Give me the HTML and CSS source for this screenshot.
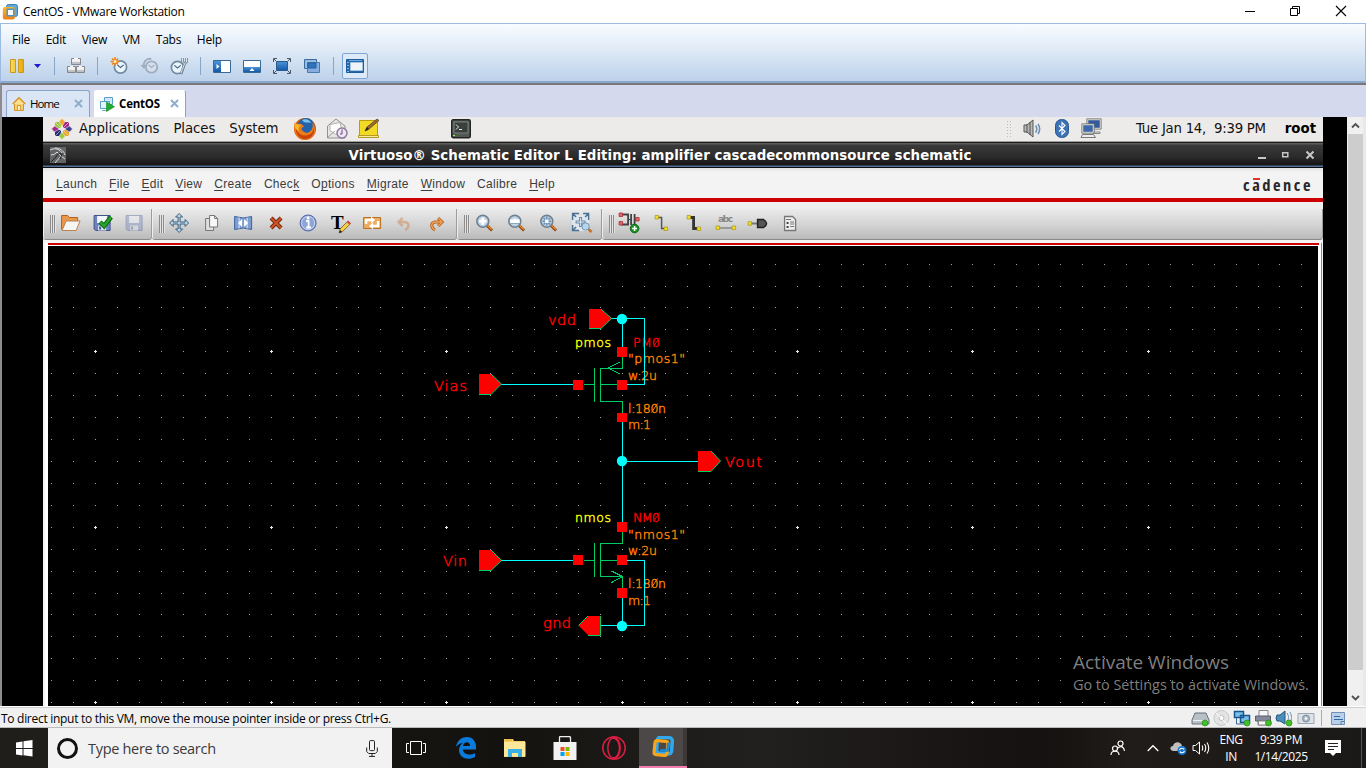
FILE: index.html
```html
<!DOCTYPE html>
<html lang="en">
<head>
<meta charset="utf-8">
<title>CentOS - VMware Workstation</title>
<link rel="stylesheet" href="styles.css">
</head>
<body>
<svg class="defs" width="0" height="0">
  <defs>
    <linearGradient id="gold" x1="0" y1="0" x2="1" y2="0"><stop offset="0" stop-color="#f7dc62"/><stop offset="1" stop-color="#e9a90c"/></linearGradient>
    <linearGradient id="blue" x1="0" y1="0" x2="0" y2="1"><stop offset="0" stop-color="#4d93d8"/><stop offset="1" stop-color="#1458a8"/></linearGradient>
    <linearGradient id="vmo" x1="0" y1="0" x2="0" y2="1"><stop offset="0" stop-color="#ffb52d"/><stop offset="1" stop-color="#ef7d10"/></linearGradient>
    <radialGradient id="lens"><stop offset="0" stop-color="#fff"/><stop offset="1" stop-color="#9dbbd4"/></radialGradient>
    <symbol id="clock" viewBox="0 0 14 14"><circle cx="7" cy="7" r="5.7" fill="#eaf5fb" stroke="#6f8ba3" stroke-width="1.6"/><path d="M4 5l3 2.5L10 5" fill="none" stroke="#406586" stroke-width="1.1"/></symbol>
    <symbol id="mag" viewBox="0 0 18 18"><path d="M11.5 11.5l5 5" stroke="#8b4308" stroke-width="3"/><path d="M11.5 11l4.8 4.8" stroke="#e18a2d" stroke-width="1.4"/><circle cx="7.2" cy="7.2" r="6" fill="url(#lens)" stroke="#71808d" stroke-width="1.5"/></symbol>
    <symbol id="floppy" viewBox="0 0 18 18"><path d="M1 1.5h16v15H2.500L1 15z" fill="#6d83bf" stroke="#42548c"/><path d="M4 2h10v7H4z" fill="#f4f6fb"/><path d="M5 11.500h8v5H5z" fill="#dfe4ec"/><path d="M6 12.500h2v3H6z" fill="#475b91"/></symbol>
  </defs>
</svg>

<header class="titlebar">
  <svg class="app-icon" width="16" height="16" viewBox="0 0 16 16"><rect x="4.500" y=".5" width="11" height="12" rx="2" fill="#5ea9da" stroke="#3d80b6"/><rect x=".8" y="3" width="12" height="12.500" rx="2" fill="url(#vmo)"/><path d="M4.500 4.500h8v8h-8z" fill="#4c94cf"/><path d="M6 6h5v5H6z" fill="#fff"/></svg>
  <span class="app-title">CentOS - VMware Workstation</span>
  <div class="win-buttons">
    <svg width="46" height="22" viewBox="0 0 46 22"><path d="M18 10.500h10" stroke="#000"/></svg>
    <svg width="46" height="22" viewBox="0 0 46 22"><path d="M17.500 7.500h7v7h-7zM19.500 7V5.500h7v7h-2" fill="none" stroke="#000"/></svg>
    <svg width="46" height="22" viewBox="0 0 46 22"><path d="M17 5l10 10M27 5L17 15" stroke="#000" stroke-width="1.100"/></svg>
  </div>
</header>

<section class="ribbon">
  <nav class="vm-menu"><span>File</span><span>Edit</span><span>View</span><span>VM</span><span>Tabs</span><span>Help</span></nav>
  <div class="vm-tools">
    <svg class="slot" viewBox="0 0 30 24"><path d="M8.500 5.500h5v13h-5zM16.500 5.500h5v13h-5z" fill="url(#gold)" stroke="#c99a1c"/></svg>
    <svg class="drop" viewBox="0 0 12 24"><path d="M2 10h7l-3.500 4z" fill="#1c1cc8"/></svg>
    <i class="sep sep-a"></i>
    <svg class="slot" viewBox="0 0 30 24"><g fill="#f0f0f0" stroke="#85898d"><path d="M10.500 4.500h9v6h-9zM6.500 12.500h8v6h-8zM15.500 12.500h8v6h-8z"/></g><path d="M11 9h8M7 17h7M16 17h7" stroke="#bfc1c4" stroke-width="2"/><path d="M13 4.500h4M9 12.500h3M18 12.500h3" stroke="#fff"/></svg>
    <i class="sep sep-b"></i>
    <svg class="slot" viewBox="0 0 30 24"><use href="#clock" x="8" y="5.500" width="15" height="15"/><path d="M10 3v9M5.500 7.500h9M7 4.500l6 6M13 4.500l-6 6" stroke="#ef8420" stroke-width="1.500"/><circle cx="10" cy="7.500" r="1.500" fill="#fff3b0"/></svg>
    <svg class="slot" viewBox="0 0 30 24"><g fill="none" stroke="#9fadbf" stroke-width="1.800"><circle cx="16.500" cy="13" r="5.700" fill="#d5e0ee"/><path d="M8.500 12.500c0-6 4-8.500 8-7.500"/><path d="M13.500 11l3 2.500 3-2.500" stroke-width="1.100"/></g><path d="M5.500 11h6.500l-3 4z" fill="#9fadbf"/></svg>
    <svg class="slot" viewBox="0 0 30 24"><use href="#clock" x="5" y="6" width="15" height="15"/><path d="M17.500 4v4l2 2 2-2V4M19.500 10L16 20" fill="none" stroke="#6f8495" stroke-width="2.600"/><path d="M17.500 4v4l2 2 2-2V4M19.500 10L16 19" fill="none" stroke="#d9e4ec" stroke-width="1"/></svg>
    <i class="sep sep-c"></i>
    <svg class="slot" viewBox="0 0 30 24"><path d="M6.500 6.500h17v12h-17z" fill="#fff" stroke="#386894"/><path d="M7 7h7v11H7z" fill="url(#blue)"/><path d="M9.500 10l3 2.500-3 2.500z" fill="#fff"/></svg>
    <svg class="slot" viewBox="0 0 30 24"><path d="M6.500 6.500h17v12h-17z" fill="#fff" stroke="#386894"/><path d="M7 13h16v5H7z" fill="url(#blue)"/><path d="M12.500 17l2.500-3 2.500 3z" fill="#fff"/></svg>
    <svg class="slot" viewBox="0 0 30 24"><path d="M9.500 7.500h11v9h-11z" fill="url(#blue)" stroke="#295a8c"/><path d="M6.500 8V4.500H10M20 4.500h3.500V8M6.500 16v3.500H10M20 19.500h3.500V16M7 5l2 2M23 5l-2 2M7 19l2-2M23 19l-2-2" fill="none" stroke="#4a5865"/></svg>
    <svg class="slot" viewBox="0 0 30 24"><path d="M7.500 5.500h12v9h-12z" fill="#9bbce0" stroke="#396c9f"/><path d="M10.500 8.500h12v10h-12z" fill="#87ace0" stroke="#4a7bab"/><path d="M11 9h8v5h-8z" fill="#2e74be" stroke="#225f9f"/></svg>
    <i class="sep sep-d"></i>
    <div class="pressed"><svg width="20" height="16" viewBox="0 0 20 16"><path d="M1.500 1.500h17v13h-17z" fill="#2468ab" stroke="#1a5c9e"/><path d="M5.500 4.500h12v8h-12z" fill="#eef4fa" stroke="#a7c4e0"/><path d="M3 4v1M3 7v1M3 10v1M3 13v1" stroke="#fff"/><path d="M4 2.500h13" stroke="#73a9dc"/></svg></div>
  </div>
</section>

<div class="tabs">
  <div class="tab tab-home"><svg width="14" height="16" viewBox="0 0 14 16"><path d="M2.500 7v7.500h9V7" fill="#f7cf72" stroke="#d2952a"/><path d="M.7 8L7 1.700 13.300 8" fill="#ffe093" stroke="#d49527" stroke-width="1.500"/><path d="M5.500 9.500h3v5h-3z" fill="#fff0b8" stroke="#d49b3b"/></svg><span>Home</span><svg class="x" width="9" height="9" viewBox="0 0 9 9"><path d="M1 1l7 7M8 1L1 8" stroke="#8eaecb" stroke-width="2"/></svg></div>
  <div class="tab tab-active"><svg width="15" height="16" viewBox="0 0 15 16"><path d="M4.500 1.500h8v7h-8z" fill="#cfeafa" stroke="#5c9ecb"/><path d="M.5 5.500h9v7h-9z" fill="#e5f5fd" stroke="#5c9ecb"/><path d="M2 14.500h6" stroke="#78a9c8"/><path d="M6.500 6l8 4.700-8 4.800z" fill="#20ad31" stroke="#0e8a24" stroke-width=".6"/></svg><span>CentOS</span><svg class="x" width="9" height="9" viewBox="0 0 9 9"><path d="M1 1l7 7M8 1L1 8" stroke="#8eaecb" stroke-width="2"/></svg></div>
</div>

<main class="viewport">
  <div class="guest">
    <div class="panel">
      <svg class="flower" width="22" height="22" viewBox="-11 -11 22 22"><path d="M-7-7h6v6h-6z" fill="#9acb3b"/><path d="M1-7h6v6H1z" fill="#a52a88"/><path d="M-7 1h6v6h-6z" fill="#262a78"/><path d="M1 1h6v6H1z" fill="#eea52f"/><g stroke="#edebea" stroke-width=".6"><path d="M0-10.500l3 3-3 5-3-5z" fill="#f0a92d"/><path d="M10.500 0l-3-3-5 3 5 3z" fill="#3a408e"/><path d="M0 10.500l3-3-3-5-3 5z" fill="#9acb3b"/><path d="M-10.500 0l3-3 5 3-5 3z" fill="#a52a88"/><path d="M-7-7L7 7M7-7L-7 7"/></g></svg>
      <span class="gm gm-app">Applications</span><span class="gm gm-pl">Places</span><span class="gm gm-sys">System</span>
      <svg class="p-fox" width="24" height="24" viewBox="0 0 24 24"><circle cx="12" cy="12" r="11" fill="#d9590e"/><circle cx="13" cy="9.500" r="8.500" fill="#2463a7"/><path d="M9 3c4-2 8 0 9 3-3-1-5 0-7-1z" fill="#79c4ec"/><path d="M2 5c1 2 2 2 4 2 2-1 4 1 5 3-3 0-3 3-1 4 3 3 7 2 9-2 1-2 1-4 0-7 5 6 4 15-4 17.500C7 25-2 17 2 5z" fill="#ed7b18"/><path d="M3 10c1 7 7 10 12 8 4-1 5-4 6-7 1 7-4 11-9 11-6 0-10-6-9-12z" fill="#c8420b"/><path d="M2 6c2 2 4 1 6 2-2 1-3 4-2 6-3-1-5-4-4-8z" fill="#f8b62c"/></svg>
      <svg class="p-mail" width="24" height="24" viewBox="0 0 24 24"><path d="M2.500 9L11 2l9 7v12h-17.500z" fill="#e6e6e4" stroke="#92938f"/><path d="M5 7.500l10-2 2 8-6 4-6-4z" fill="#fff" stroke="#b5b5b0"/><path d="M3 20l7-6M20 20l-7-6" stroke="#9b9b97"/><circle cx="17" cy="16" r="5" fill="#eee6f4" stroke="#8f799d" stroke-width="1.500"/><path d="M17 12.500V17h-2" fill="none" stroke="#65517a"/></svg>
      <svg class="p-note" width="24" height="24" viewBox="0 0 24 24"><path d="M2.500 3.500h18v15h-18z" fill="#f3da25" stroke="#bb9d10"/><path d="M1.500 18.500h20v2h-20z" fill="#f8ee99" stroke="#b49a24"/><path d="M8 14l2-4L20 2l2 1.500L11.500 12.500z" fill="#9b6b30" stroke="#4b3c2a" stroke-width=".7"/><path d="M8 14l2-4 2 2z" fill="#222"/></svg>
      <svg class="p-term" width="20" height="20" viewBox="0 0 20 20"><rect x=".7" y=".7" width="18.600" height="18" rx="1.500" fill="#535855" stroke="#222524" stroke-width="1.400"/><path d="M3 3h14v11H3z" fill="#39403c" stroke="#8b918e" stroke-width=".8"/><path d="M5 5.500l2.500 2.500L5 10.500M8 10.500h3" fill="none" stroke="#e6eae8"/><path d="M2 16.500h2" stroke="#8f4"/></svg>
      <svg class="p-grip" width="5" height="18" viewBox="0 0 5 18"><path d="M.5 1v17M3.500 1v17" stroke="#bbb" stroke-dasharray="1 2"/></svg>
      <svg class="p-vol" width="22" height="22" viewBox="0 0 22 22"><path d="M2 7h3l6-5v17l-6-5H2z" fill="#b8bab7" stroke="#555753"/><path d="M5 6v9M8 4v13" stroke="#555"/><path d="M13.500 7.500c1.500 2 1.500 5 0 7M16 6c2 3 2 7 0 10" fill="none" stroke="#6b8eb5" stroke-width="1.500"/></svg>
      <svg class="p-bt" width="14" height="20" viewBox="0 0 14 20"><rect x=".5" y=".5" width="13" height="18" rx="6" fill="#3d73b5" stroke="#285894"/><path d="M4 6.500l6 6-3 3v-12l3 3-6 6" fill="none" stroke="#fff" stroke-width="1.100"/></svg>
      <svg class="p-net" width="22" height="22" viewBox="0 0 22 22"><path d="M7.500 1.500h13v9h-13z" fill="#31599b" stroke="#dadad7" stroke-width="1.500"/><path d="M6.800.8h14.400v10.400H6.800z" fill="none" stroke="#60625e" stroke-width=".7"/><path d="M13 11v3h7v1.500h-7" stroke="#888" fill="#eee"/><path d="M2.500 6.500h11v8h-11z" fill="#3c67a8" stroke="#dadad7" stroke-width="1.500"/><path d="M1.800 5.800h12.400v9.400H1.800z" fill="none" stroke="#60625e" stroke-width=".7"/><path d="M1 19.500l1.500-3h11l2 3z" fill="#eee" stroke="#777"/></svg>
      <span class="gm gm-date">Tue Jan 14,&nbsp; 9:39 PM</span><b class="gm gm-root">root</b>
    </div>

    <div class="eda-title">
      <svg width="16" height="16" viewBox="0 0 16 16"><path d="M0 0h16v16H0z" fill="#626466"/><path d="M0 3c6-3 10 0 12 3M5 1c5 0 9 3 10 7M1 8c3 0 5-2 6-3l4 4-6 7M11 9l4 3" fill="none" stroke="#ddd"/><path d="M6 10c1-3 3-4 6-3l-2 5M1 15l5-5" fill="none" stroke="#222"/></svg>
      <b class="eda-name">Virtuoso® Schematic Editor L Editing: amplifier cascadecommonsource schematic</b>
      <svg width="60" height="16" viewBox="0 0 60 16"><g stroke="#c7c7c7" fill="none"><path d="M4 11h8" stroke-width="2"/><path d="M28.700 5.700h5.100v4.100h-5.100z" stroke-width="1.500"/><path d="M52.500 4.500l7 7M59.500 4.500l-7 7" stroke-width="2"/></g></svg>
    </div>

    <div class="eda-menu">
      <span><u>L</u>aunch</span><span><u>F</u>ile</span><span><u>E</u>dit</span><span><u>V</u>iew</span><span><u>C</u>reate</span><span>Chec<u>k</u></span><span>O<u>p</u>tions</span><span><u>M</u>igrate</span><span><u>W</u>indow</span><span>Calibre</span><span><u>H</u>elp</span>
      <b class="brand">c<i class="macron">a</i>dence</b>
    </div>

    <div class="eda-tools">
      <div class="group g1"><i class="handle"></i>
        <svg viewBox="0 0 32 30"><path d="M7.500 21.500v-14h6l2 2h8v4" fill="#e8974b" stroke="#b3601e"/><path d="M8 22.500l4-9.500h14l-4 9.500z" fill="#f6f6f4" stroke="#b98355"/></svg>
        <svg viewBox="0 0 32 30"><use href="#floppy" x="7" y="6" width="18" height="18"/><path d="M14 14l4 4 7-9" fill="none" stroke="#08670b" stroke-width="4.500"/><path d="M14 14l4 4 7-9" fill="none" stroke="#27a52a" stroke-width="2.500"/></svg>
        <svg viewBox="0 0 32 30" opacity=".38"><use href="#floppy" x="7" y="6" width="18" height="18"/></svg>
      </div>
      <div class="group g2"><i class="handle"></i>
        <svg viewBox="0 0 32 30"><path d="M16 5.500l3.500 3.500h-2.500v5h5v-2.500l3.500 3.500-3.500 3.500V16h-5v5h2.500L16 24.500 12.500 21H15v-5h-5v2.500L6.500 15l3.500-3.500V14h5V9h-2.500z" fill="#bdd3e4" stroke="#38617f"/></svg>
        <svg viewBox="0 0 32 30"><path d="M10.500 10.500h8v12h-8z" fill="#dedede" stroke="#777"/><path d="M14.500 7.500h5l3 3v8.500h-8z" fill="#f7f7f7" stroke="#777"/><path d="M19.500 7.500v3h3" fill="none" stroke="#777"/></svg>
        <svg viewBox="0 0 32 30"><path d="M7.500 8.500q9 3 17 0v13q-8-3-17 0z" fill="#7e9ed0" stroke="#3d609f"/><path d="M12 9.500v11M20 9.500v11" stroke="#dce8f8"/><path d="M15 11v8l-4-4zM17 11v8l4-4z" fill="#fff"/></svg>
        <svg viewBox="0 0 32 30"><path d="M11 10l10 10M21 10L11 20" stroke="#75290e" stroke-width="4"/><path d="M11 10l10 10M21 10L11 20" stroke="#ce5427" stroke-width="2"/></svg>
        <svg viewBox="0 0 32 30"><circle cx="16" cy="15" r="8" fill="#8ea5da" stroke="#5369a5"/><circle cx="16" cy="15" r="6.500" fill="none" stroke="#c8d4f0"/><path d="M14 13h2.500v6M14 19.500h5" fill="none" stroke="#fff" stroke-width="1.800"/><circle cx="16" cy="10" r="1.500" fill="#fff"/></svg>
        <svg viewBox="0 0 32 30"><text x="7" y="21" class="big-t">T</text><path d="M15 25l1-4 8-8 2.500 2.500-8 8z" fill="#f3d443" stroke="#7a4a22" stroke-width=".8"/><path d="M24 12.500l2.500 2.500-1.500 1.500-2.500-2.500z" fill="#d34b4b"/><path d="M15 25l1-3 2 2z" fill="#222"/></svg>
        <svg viewBox="0 0 32 30"><path d="M7.500 9.500h17v11h-17z" fill="#ecad61" stroke="#b87025"/><path d="M10 16v-4h6M22 13v5h-6" fill="none" stroke="#fff" stroke-width="2.500"/><path d="M15 8.500l4 3.500-4 3.500zM17 14.500l-4 3.500 4 3.500z" fill="#fff"/></svg>
        <svg viewBox="0 0 32 30" opacity=".42"><path d="M14.500 10l-4 4 4 4M11 14h6c5 1 4 6 0 8" fill="none" stroke="#cf793d" stroke-width="2.500"/></svg>
        <svg viewBox="0 0 32 30"><path d="M17 10l4 4-4 4M20 14h-6c-5 1-4 6 0 8" fill="none" stroke="#b45b18" stroke-width="3"/><path d="M17 10l4 4-4 4M20 14h-6c-5 1-4 6 0 8" fill="none" stroke="#f0a25b" stroke-width="1.300"/></svg>
      </div>
      <div class="group g3"><i class="handle"></i>
        <svg viewBox="0 0 32 30"><use href="#mag" x="7.500" y="6" width="18" height="18"/><path d="M11 13.200h7.500M14.700 9.500V17" stroke="#fff" stroke-width="2.600"/></svg>
        <svg viewBox="0 0 32 30"><use href="#mag" x="7.500" y="6" width="18" height="18"/><path d="M10 13.200h9.500" stroke="#fff" stroke-width="3.500"/><path d="M10.500 15.500h8.500" stroke="#88a8c0"/></svg>
        <svg viewBox="0 0 32 30"><use href="#mag" x="7.500" y="6" width="18" height="18"/><path d="M11.500 10l6.500 6.500M18 10l-6.500 6.500M14.700 8.500v9M10.500 13.200h8.500" stroke="#668eb1" stroke-width="1.500"/><path d="M13 11.500h3.500V15H13z" fill="#fff"/></svg>
        <svg viewBox="0 0 32 30"><path d="M7 7h17v16H7z" fill="#dfe7ee"/><path d="M7.500 12V5.500H14M18 5.500h5.500V12M7.500 17v5.500H14M8 6l3 3M23 6l-3 3M8 22l3-3" fill="none" stroke="#4a6f90" stroke-width="1.400"/><path d="M15.500 9v10M10.500 14h10" stroke="#668aa8" stroke-width="3"/><path d="M15.500 10v8M11.500 14h8" stroke="#dfeaf3" stroke-width="1"/><path d="M22 20l4.500 4" stroke="#c37123" stroke-width="2.500"/><circle cx="20.500" cy="18.500" r="3.700" fill="#b5d5ee" stroke="#7998b0"/></svg>
      </div>
      <div class="group g4"><i class="handle"></i>
        <svg viewBox="0 0 32 30"><path d="M8 6.500h7v10H8M18 6v11M21.500 6v11M22 11.500h3" fill="none" stroke="#444" stroke-width="1.800"/><path d="M15 11.500h3" stroke="#444"/><path d="M6 5h3.500v3.500H6zM6 13.500h3.500V17H6zM22.500 9.500H26V13h-3.500z" fill="#e26668" stroke="#a62f35" stroke-width=".8"/><circle cx="21.500" cy="20.500" r="4.300" fill="#179422" stroke="#0a6815"/><path d="M21.500 18v5M19 20.500h5" stroke="#fff" stroke-width="1.500"/></svg>
        <svg viewBox="0 0 32 30"><path d="M12 9.500h4.500v11H21" fill="none" stroke="#555" stroke-width="1.500"/><path d="M10 7.500h3.500V11H10zM19 19h3.500v3.500H19z" class="pad"/></svg>
        <svg viewBox="0 0 32 30"><path d="M12 9.500h4.500v11H21" fill="none" stroke="#333" stroke-width="2.800"/><path d="M10 7.500h3.500V11H10zM20 19h3.500v3.500H20z" class="pad"/></svg>
        <svg viewBox="0 0 32 30"><text x="8" y="14" class="abc" textLength="15">abc</text><path d="M8 20h16" stroke="#666"/><path d="M6 18h3.500v3.500H6zM22 18h3.500v3.500H22z" class="pad"/></svg>
        <svg viewBox="0 0 32 30"><path d="M9 15.500h6" stroke="#777" stroke-width="2"/><path d="M15.500 11.500h6q6 4 0 8h-6z" fill="#555" stroke="#222" stroke-width="1.500"/><path d="M6 13.700h3.500v3.500H6z" class="pad"/></svg>
        <svg viewBox="0 0 32 30"><path d="M10.500 8.500h8l3 3v11h-11z" fill="#eee" stroke="#777" stroke-width="1.300"/><path d="M12.500 15h2M12.500 19h2" stroke="#444" stroke-width="2"/><path d="M16 14h4M16 18.500h4M16 16h4M12 11.500h5" stroke="#777"/></svg>
      </div>
    </div>

    <div class="design">
      <svg class="schematic" width="1270" height="460" viewBox="48 246 1270 460">
        <path id="grid" fill="#a0a0ac" shape-rendering="crispEdges"/>
        <path id="grid-major" fill="#e8e8f0" shape-rendering="crispEdges"/>
        <g class="lbl orange">
          <text x="628" y="363" textLength="57">"pmos1"</text><text x="628" y="380" textLength="29">w:2u</text><text x="628" y="413" textLength="38">l:180n</text><text x="628" y="429" textLength="23">m:1</text>
          <text x="628" y="539" textLength="57">"nmos1"</text><text x="628" y="555" textLength="29">w:2u</text><text x="628" y="588" textLength="38">l:180n</text><text x="628" y="605" textLength="23">m:1</text>
        </g>
        <g class="lbl yellow"><text x="575" y="347" textLength="36">pmos</text><text x="575" y="522" textLength="36">nmos</text></g>
        <g class="lbl red"><text x="633" y="347" textLength="27">PM0</text><text x="633" y="522" textLength="27">NM0</text></g>
        <g class="lbl red pin"><text x="548" y="325" textLength="28">vdd</text><text x="434" y="391" textLength="33">Vias</text><text x="725" y="467" textLength="37">Vout</text><text x="443" y="566" textLength="24">Vin</text><text x="543" y="628" textLength="28">gnd</text></g>
        <path d="M653.500 346.500l6-9M653.500 521.500l6-9" stroke="#f00000"/>
        <path d="M651.500 412.500l6-9M651.500 587.500l6-9" stroke="#ff8000"/>
        <g fill="none" stroke="#00cc66" shape-rendering="crispEdges">
          <path d="M584 384.500h11M594.500 368v34M600.500 368v34M600 368.500h22.500V357M601 384.500h16M600 401.500h22.500v12M608.500 368l11-6M608.500 368l11 6"/>
          <path d="M584 560.500h11M594.500 543v34M600.500 543v34M600 543.500h22.500V532M601 560.500h16M600 576.500h22.500V589M622.500 576.500l-11-5.500M622.500 576.500l-11 6"/>
        </g>
        <g fill="none" stroke="#00ffff" shape-rendering="crispEdges">
          <path d="M611 318.500h33.500v66H627M622.500 318v30M501 384.500h72M622.500 422v100M622 461.500h76M501 560.500h72M627 560.500h17.500v65H601M622.500 598v28"/>
        </g>
        <g fill="#f00">
          <path d="M589 309h12l10.500 9.500L601 328.500h-12z"/><path d="M479 374h12l10.500 10-10.500 10h-12z"/><path d="M698 451h13l9.500 10-9.500 10h-13z"/><path d="M479 550h12l10.500 10.500L491 570.500h-12z"/><path d="M600.500 616H588l-9.500 9.500 9.500 9.500h12.500z"/>
        </g>
        <g fill="none" stroke="#00cc66"><path d="M601 309l10.500 9.500-10.500 10h-12M491 374l10.500 10-10.500 10.500h-12M711 451l9.500 10-9.500 10.500h-13M491 550l10.500 10.500-10.500 10h-12M588 616l-9.500 9.500M588 635.500h12.500V616"/></g>
        <g fill="#f00" shape-rendering="crispEdges"><path d="M617 347h10v10h-10zM573 380h10v10h-10zM617 380h10v10h-10zM617 413h10v9h-10zM617 522h10v10h-10zM573 555h10v10h-10zM617 555h10v10h-10zM617 588h10v10h-10z"/></g>
        <g fill="#0ff"><circle cx="622" cy="319" r="5.200"/><circle cx="622" cy="461" r="5.200"/><circle cx="622" cy="626" r="5.200"/></g>
      </svg>
    </div>
  </div>
  <div class="scroll">
    <svg width="16" height="17" viewBox="0 0 16 17"><path d="M5 10.500l3.500-3.500 3.500 3.500" fill="none" stroke="#505050" stroke-width="1.800"/></svg>
    <div class="thumb"></div>
    <svg width="16" height="17" viewBox="0 0 16 17"><path d="M5 7l3.500 3.500L12 7" fill="none" stroke="#505050" stroke-width="1.800"/></svg>
  </div>
  <div class="watermark"><p class="w1">Activate Windows</p><p class="w2">Go to Settings to activate Windows.</p></div>
</main>

<footer class="status">
  <span class="hint">To direct input to this VM, move the mouse pointer inside or press Ctrl+G.</span>
  <svg viewBox="0 0 21 18"><path d="M5 4h11l3 7v4H2v-4z" fill="#b9c1c8" stroke="#66717b"/><path d="M3 11.500h15" stroke="#edf1f3"/><circle cx="15" cy="14" r="3" class="led"/></svg>
  <svg viewBox="0 0 21 18"><circle cx="10.500" cy="9" r="7.500" fill="#e4e4e4" stroke="#c9c9c9"/><circle cx="10.500" cy="9" r="2.500" fill="#fff" stroke="#bbb"/><path d="M5 4l4 4M12 11l4 4" stroke="#fff"/></svg>
  <svg viewBox="0 0 21 18"><path d="M2.500 2.500h9v6h-9zM8.500 6.500h9v7h-9z" fill="#7bc0ed" stroke="#17558a" stroke-width="1.500"/><path d="M4.500 9v6H14" fill="none" stroke="#376997"/><circle cx="15" cy="14" r="3" class="led"/></svg>
  <svg viewBox="0 0 21 18"><path d="M6 1.500h9v7H6zM5 12h11v4H5z" fill="#f8f8f8" stroke="#888"/><path d="M2.500 7h15v5h-15z" fill="#85889b" stroke="#5c5e70"/><path d="M5.500 12h10v4h-10z" fill="#f8f8f8" stroke="#888"/><circle cx="15.500" cy="14" r="3" class="led"/></svg>
  <svg viewBox="0 0 21 18"><path d="M3 6h3l5-4v13l-5-3H3q-2-3 0-6z" fill="#4c8ebb" stroke="#25567c"/><path d="M13 4c2 3 2 6 0 9M16 3c2 4 2 7 0 11" stroke="#6b92b0" fill="none"/><circle cx="15" cy="14" r="3" class="led"/></svg>
  <svg viewBox="0 0 21 18"><path d="M3 4.500h16v10H3z" fill="#dce2e8" stroke="#9da8b1"/><circle cx="11" cy="9.500" r="3.500" fill="#a9bac6" stroke="#778d9c"/><circle cx="11" cy="9.500" r="1.300" fill="#fff"/></svg>
  <i class="status-sep"></i>
  <svg viewBox="0 0 21 18"><path d="M4.500 3.500h13v12h-13z" fill="#b7d0eb" stroke="#748fb1"/><path d="M7 7.500h6M7 10.500h9" stroke="#3465a1"/><path d="M14 15.500v-3h3.500" fill="none" stroke="#5c80aa"/></svg>
</footer>

<div class="taskbar">
  <div class="start"><svg width="17" height="17" viewBox="0 0 17 17"><path d="M0 2.500l6.500-1v6.500H0zM7.500 1.300L16.500 0v8h-9zM0 9h6.500v6.500L0 14.500zM7.500 9h9v7.500l-9-1.200z" fill="#fff"/></svg></div>
  <div class="search"><i class="ring"></i><span>Type here to search</span><svg width="12" height="17" viewBox="0 0 12 17"><rect x="3.500" y=".6" width="5" height="10" rx="1" fill="none" stroke="#222"/><path d="M.7 7.500v4l2 2h6.600l2-2v-4M6 13.500v3M3 16.400h6" fill="none" stroke="#222"/></svg></div>
  <div class="pins">
    <div><svg width="20" height="16" viewBox="0 0 20 16"><path d="M4.500 1.500h11v13h-11zM3 3.500H.5v9H3M17 3.500h2.500v9H17" fill="none" stroke="#fff"/></svg></div>
    <div><svg width="22" height="22" viewBox="0 0 22 22"><path d="M1 10C2 4 6 0 12 0c6 0 9 5 9 10v2.500H8c0 5 7 6.500 12 3.700V20c-7 4-16 1-16-7 0-3 2-6 4-7-3 0-5.500 2-7 4zM8 9h7c0-5-6-5-7 0z" fill="#0a7bdb"/></svg></div>
    <div><svg width="22" height="20" viewBox="0 0 22 20"><path d="M0 1h9l1 2h11v16H0z" fill="#f6cf68"/><path d="M1 2h7" stroke="#e5a91c"/><path d="M0 4h21.500v14.500H0z" fill="#ffe79a"/><path d="M4 11h14v8h-4v-4H8v4H4z" fill="#39b0e6"/></svg></div>
    <div><svg width="24" height="24" viewBox="0 0 24 24"><path d="M6.500 6V1.500q0-1 1-1h8q2 0 2 1V6" fill="none" stroke="#eee" stroke-width="1.300"/><path d="M.5 6h23v18H.5z" fill="#f2f2f2"/><path d="M7.500 11h4v4h-4z" fill="#f25022"/><path d="M12.500 11h4v4h-4z" fill="#7fba00"/><path d="M7.500 16h4v4h-4z" fill="#00a4ef"/><path d="M12.500 16h4v4h-4z" fill="#ffb900"/></svg></div>
    <div><svg width="24" height="24" viewBox="0 0 24 24"><g fill="none" stroke="#d81e43" stroke-width="1.500"><circle cx="12" cy="12" r="11.200"/><ellipse cx="12" cy="12" rx="6.200" ry="10.500"/><path d="M10 2c10-1 10 21 0 20"/></g></svg></div>
    <div class="current"><svg width="22" height="22" viewBox="0 0 22 22"><rect x="5" y="1.500" width="15" height="16" rx="3" transform="rotate(4 12 9)" fill="none" stroke="#30a8eb" stroke-width="3.500"/><rect x="2.500" y="5" width="13" height="14" rx="2.500" transform="rotate(6 9 12)" fill="none" stroke="#f9a51b" stroke-width="3.200"/><path d="M8 14.500h7.500l1-8" fill="none" stroke="#168bd8" stroke-width="2.500"/></svg></div>
  </div>
  <div class="tray">
    <svg class="t-people" width="16" height="16" viewBox="0 0 16 16"><g fill="none" stroke="#fff" stroke-width="1.200"><circle cx="10.500" cy="3.500" r="2.500"/><circle cx="5" cy="8.500" r="2.500"/><path d="M1 15c0-5 8-5 8 0M8 8c3-3 6-1 6.500 3"/></g></svg>
    <svg class="t-chev" width="12" height="8" viewBox="0 0 12 8"><path d="M.7 7L6 1.700 11.300 7" fill="none" stroke="#fff" stroke-width="1.300"/></svg>
    <svg class="t-cloud" width="17" height="16" viewBox="0 0 17 16"><path d="M3 11C-1 10 0 6 3 6c1-5 8-5 9 0 4 0 4 5 1 5z" fill="#bfbfbf"/><circle cx="12" cy="10.500" r="4.500" fill="#1675c9"/><path d="M9.500 10c1-2.500 4-2 4.500-.5M14.500 11c-1 2.500-4 2-4.500.5" fill="none" stroke="#fff" stroke-width="1.200"/></svg>
    <svg class="t-vol" width="18" height="16" viewBox="0 0 18 16"><path d="M1 5.500h2.500l4-3.500v12l-4-3.500H1z" fill="none" stroke="#fff"/><path d="M10 5.500q1.500 2.500 0 5M12.500 4q2.500 4 0 8M15 2.500q3.500 5.500 0 11" fill="none" stroke="#fff" stroke-width="1.100"/></svg>
    <div class="two lang"><span>ENG</span><span>IN</span></div>
    <div class="two time"><span>9:39 PM</span><span class="date">1/14/2025</span></div>
    <svg class="t-note" width="16" height="16" viewBox="0 0 16 16"><path d="M0 0h16v13h-5l-3 3-3-3H0z" fill="#fff"/><path d="M3 3.500h10M3 6.500h10M3 9.500h6" stroke="#222"/></svg>
    <i class="peek"></i>
  </div>
</div>
<script src="grid.js"></script>
</body>
</html>
```

FILE: styles.css
```css
* { box-sizing: border-box; }
body { margin: 0; width: 1366px; height: 768px; overflow: hidden; display: flex; flex-direction: column; background: #f0f0f0; font-family: "Open Sans", "Noto Sans", sans-serif; font-size: 12px; color: #000; }
svg { display: block; flex: none; }
span, b { white-space: nowrap; }
.defs { position: absolute; }

.titlebar { height: 23px; flex: none; display: flex; align-items: center; background: #fff; padding-left: 2px; }
.app-title { margin-left: 5px; letter-spacing: -.26px; }
.win-buttons { margin-left: auto; display: flex; margin-right: 1px; }

.ribbon { height: 60px; flex: none; border: 1px solid #9dbbe0; border-bottom: 2px solid #8ba9cf; background: linear-gradient(#f9fcff, #dce8f5 50%, #bcd1ea); }
.vm-menu { display: flex; height: 30px; align-items: center; padding: 0 0 0 11px; gap: 15.700px; letter-spacing: -.25px; }
.vm-tools { display: flex; height: 26px; align-items: center; margin-top: -1px; padding-left: 1px; }
.slot { width: 30px; height: 24px; }
.drop { width: 12px; height: 24px; }
.sep { width: 1px; height: 18px; background: #86a5cd; flex: none; }
.sep-a { margin: 0 6px 0 10px; }
.sep-b { margin: 0 7px 0 6px; }
.sep-c { margin: 0 6px 0 5px; }
.sep-d { margin: 0 8px 0 6px; }
.pressed { width: 26px; height: 26px; border: 1px solid #7fa5d4; border-radius: 2px; background: #dce9f8; display: grid; place-items: center; }

.tabs { height: 34px; flex: none; border-top: 2px solid #77777c; border-left: 2px solid #8c8c90; background: #d4d9ed; display: flex; align-items: flex-end; padding-left: 4px; gap: 4px; font-size: 11.500px; }
.tab { height: 27px; display: flex; align-items: center; border: 1px solid #86a5c6; border-bottom: 0; border-radius: 3px 3px 0 0; }
.tab span { margin-left: 4px; margin-top: -1px; }
.tab-home { width: 84px; background: #dae6f5; padding-left: 5px; }
.tab-home span { letter-spacing: -1px; letter-spacing: -.9px; }
.tab-active { width: 92px; background: #fff; padding-left: 5px; border-color: #fff #86a5c6 #fff #fff; }
.tab-active span { font-weight: 700; letter-spacing: -.2px; }
.x { margin: -2px 6px 0 auto; }

.viewport { position: relative; height: 589px; flex: none; display: flex; background: #000; border-left: 2px solid #8c8c90; padding-left: 41px; }
.guest { width: 1280px; display: flex; flex-direction: column; background: #f3f3f3; }
.panel { height: 24px; flex: none; display: flex; align-items: center; background: #edebea; padding-left: 8px; }
.gm { font-family: "DejaVu Sans", sans-serif; font-size: 13.3px; letter-spacing: -.07px; margin-top: -2px; color: #111; }
.gm-app { margin-left: 6px; }
.gm-pl { margin-left: 14px; }
.gm-sys { margin-left: 14px; }
.p-fox { margin-left: 15px; }
.p-mail { margin-left: 8px; }
.p-note { margin-left: 8px; }
.p-term { margin-left: 70px; }
.p-grip { margin-left: auto; }
.p-vol { margin-left: 10px; }
.p-bt { margin-left: 11px; }
.p-net { margin-left: 11px; }
.gm-date { margin-left: 34px; letter-spacing: -.25px; }
.gm-root { margin: -2px 7px 0 19px; color: #000; letter-spacing: 0; }

.eda-title { height: 27px; flex: none; display: flex; align-items: center; border-top: 1px solid #a29f9c; border-bottom: 1px solid #0a0d12; background: linear-gradient(#1b1b1b 0 1px, #5c5c5c 1px 2px, #3a3a3a 3px, #2b2b2b 15px, #141414 23px, #536f95 24px); padding: 0 9px 0 7px; }
.eda-title > svg:first-child { margin-top: 1px; }
.eda-name { flex: 1; text-align: center; font: 700 13.33px "DejaVu Sans", sans-serif; letter-spacing: .08px; color: #fff; margin-top: 1px; }
.eda-menu { height: 30px; flex: none; display: flex; align-items: center; gap: 11.900px; padding: 2px 10px 0 13px; background: linear-gradient(#e2e2e2, #f3f3f3 4px); font: 12px "Liberation Sans", Arial, sans-serif; letter-spacing: .3px; color: #3c3c3c; }
.eda-menu u { text-underline-offset: 2px; }
.brand { margin-left: auto; margin-top: 1px; font: 700 16.500px "Open Sans", sans-serif; letter-spacing: 2.500px; color: #2a2728; font-stretch: condensed; }
.macron { position: relative; font-style: normal; }
.macron::after { content: ""; position: absolute; left: 1px; top: 5px; width: 7px; height: 1.500px; background: #e4322d; }

.eda-tools { height: 42px; flex: none; display: flex; border-top: 4px solid #cf0000; background: #efefef; padding-top: 7px; }
.group { height: 31px; display: flex; align-items: center; padding: 0 0 2px 7px; background: linear-gradient(#ebebeb, #d2d2d2 55%, #bababa); border-bottom: 1px solid #8a8a8a; border-right: 1px solid #9c9c9c; border-radius: 0 0 3px 3px; box-shadow: inset 1px 0 #eee; }
.group svg { width: 32.200px; height: 30px; }
.handle { width: 6px; height: 18px; margin: 2px -2px 0 0; background: repeating-linear-gradient(90deg, #8b8b8b 0 1px, #e4e4e4 1px 2px); flex: none; }
.g1 { width: 109px; }
.g2 { width: 305px; }
.g3 { width: 145px; }
.g4 { width: 721px; }
.big-t { font: 700 19px "Liberation Serif", serif; }
.abc { font: 700 9.500px "DejaVu Sans", sans-serif; fill: #888; }
.pad { fill: #f0df25; stroke: #a69414; stroke-width: .7; }

.design { flex: 1; margin: 3px 1px 0 2px; padding: 2px 3px 0; background: #fff; border-right: 1px solid #8a8a8a; }
.design::before { content: ""; display: block; width: 1271px; height: 2px; background: #cf0000; margin: -2px 0 1px; }
.schematic { background: #000; }
.lbl { font-family: "DejaVu Sans", sans-serif; font-weight: 200; font-size: 12.500px; stroke-width: .45px; }
.orange { fill: #ff8000; stroke: #ff8000; }
.yellow { fill: #ffff00; stroke: #ffff00; }
.red { fill: #ff0000; stroke: #ff0000; }
.pin { font-size: 14.500px; }

.scroll { margin-left: 24px; width: 19px; background: #f0f0f0; display: flex; flex-direction: column; border-right: 3px solid #e9e9e9; }
.thumb { flex: none; margin: 0 0 19px 1px; width: 15px; height: 536px; background: #cdcdcd; }
.watermark { position: absolute; left: 1071px; top: 533px; color: #7e7e7e; }
.watermark p { margin: 0; white-space: nowrap; }
.w1 { font-size: 19px; line-height: 24px; }
.w2 { font-size: 14.400px; line-height: 21px; }

.status { height: 22px; flex: none; display: flex; align-items: center; border-top: 1px solid #fff; box-shadow: inset 0 1px #d0d0d0; border-bottom: 1px solid #bbb; background: #f0f0f0; padding: 2px 18px 0 1px; }
.hint { margin-right: auto; letter-spacing: -.29px; }
.status svg { width: 21px; height: 18px; }
.status-sep { width: 1px; height: 16px; background: #aaa; margin: 0 5px; }
.led { fill: #43bf29; stroke: #28871a; stroke-width: .7; }

.taskbar { height: 40px; flex: none; display: flex; background: linear-gradient(90deg, #1d1c1a 0, #14120f 500px, #1c1b19 640px, #22201e 760px, #141110 1040px, #201c19 1130px, #1a1918); color: #fff; }
.start { width: 48px; display: grid; place-items: center; background: #1f1e1b; }
.search { width: 344px; display: flex; align-items: center; background: #f2f2f2; color: #3b3b3b; padding: 0 14px 0 9px; font-size: 14.500px; }
.search span { margin-left: 10px; margin-right: auto; letter-spacing: -.3px; }
.ring { width: 21px; height: 21px; border: 3px solid #111; border-radius: 50%; flex: none; }
.pins { display: flex; }
.pins div { width: 49.400px; display: grid; place-items: center; }
.pins div:first-child { padding-right: 1px; }
.pins .current { width: 48px; background: #4b4847; border-bottom: 2px solid #f47fae; box-shadow: inset -4px 0 #3b3837; }
.tray { margin-left: auto; display: flex; align-items: center; }
.t-chev { margin-left: 21px; }
.t-cloud { margin-left: 11px; }
.t-vol { margin-left: 5px; }
.two { display: flex; flex-direction: column; align-items: center; line-height: 17px; font-size: 12px; }
.lang { width: 32px; margin-left: 5px; }
.time { width: 60px; margin-left: 4px; }
.two span { letter-spacing: -.4px; }
.t-note { margin-left: 14px; }
.peek { width: 1px; height: 40px; background: #55524f; margin: 0 4px 0 20px; }
```

FILE: grid.js
```js
// Dot grid of the schematic canvas: every eighth crossing is a larger mark.
const step = 21.93;
let minor = "";
let major = "";
for (let i = -2; i < 56; i++) {
  for (let j = -4; j < 17; j++) {
    const x = Math.round(95.25 + i * step);
    const y = Math.round(351.3 + j * step);
    minor += `M${x} ${y}h1v1h-1z`;
    if (i % 8 === 0 && j % 8 === 0) {
      major += `M${x - 1} ${y}h3v1h-3zM${x} ${y - 1}h1v3h-1z`;
    }
  }
}
document.getElementById("grid").setAttribute("d", minor);
document.getElementById("grid-major").setAttribute("d", major);
```
